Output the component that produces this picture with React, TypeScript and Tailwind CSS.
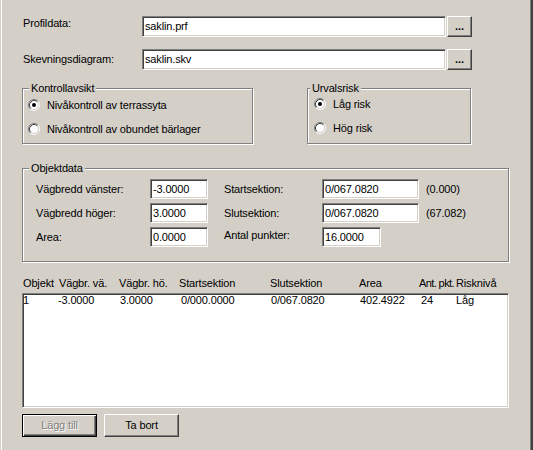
const sunken =
  'border border-t-[#808080] border-l-[#808080] border-b-white border-r-white shadow-[inset_1px_1px_0_#404040,inset_-1px_-1px_0_#d4d0c8] bg-white';
const raised =
  'border border-t-white border-l-white border-b-[#404040] border-r-[#404040] shadow-[inset_-1px_-1px_0_#808080] bg-[#d4d0c8]';

function Edit({ value, className }: { value: string; className: string }) {
  return (
    <div className={`${sunken} ${className} flex items-center pl-[2px] leading-[13px] whitespace-nowrap overflow-hidden`}>
      {value}
    </div>
  );
}

function Radio({ checked }: { checked?: boolean }) {
  return (
    <svg width="12" height="12" viewBox="0 0 12 12" className="shrink-0">
      <circle cx="6" cy="6" r="4.5" fill="#fff" />
      <path d="M2.11 9.89A5.5 5.5 0 0 1 9.89 2.11" fill="none" stroke="#808080" strokeWidth="1" />
      <path d="M9.89 2.11A5.5 5.5 0 0 1 2.11 9.89" fill="none" stroke="#fff" strokeWidth="1" />
      <path d="M2.82 9.18A4.5 4.5 0 0 1 9.18 2.82" fill="none" stroke="#404040" strokeWidth="1" />
      <path d="M9.18 2.82A4.5 4.5 0 0 1 2.82 9.18" fill="none" stroke="#d4d0c8" strokeWidth="1" />
      {checked && <circle cx="6" cy="6" r="2" fill="#000" />}
    </svg>
  );
}

function GroupBox({
  title,
  titleLeft,
  className,
  children,
}: {
  title: string;
  titleLeft: string;
  className: string;
  children?: React.ReactNode;
}) {
  return (
    <div className={`relative border border-[#808080] shadow-[inset_1px_1px_0_#fff,1px_1px_0_#fff] ${className}`}>
      <span className={`absolute ${titleLeft} top-[-8px] px-[2px] bg-[#d4d0c8] leading-[14px]`}>{title}</span>
      {children}
    </div>
  );
}

const headers = [
  ['Objekt', 'w-[36px]'],
  ['Vägbr. vä.', 'w-[60px]'],
  ['Vägbr. hö.', 'w-[60px]'],
  ['Startsektion', 'w-[91px]'],
  ['Slutsektion', 'w-[89px]'],
  ['Area', 'w-[60px]'],
  ['Ant. pkt.', 'w-[37px] tracking-[-0.6px]'],
  ['Risknivå', ''],
];

const rowCells = [
  ['1', 'w-[35px]'],
  ['-3.0000', 'w-[62px]'],
  ['3.0000', 'w-[61px]'],
  ['0/000.0000', 'w-[90px]'],
  ['0/067.0820', 'w-[89px]'],
  ['402.4922', 'w-[61px]'],
  ['24', 'w-[35px]'],
  ['Låg', ''],
];

export default function App() {
  return (
    <div className="w-[533px] h-[450px] bg-[#d4d0c8] pl-px text-black text-[11px] tracking-[-0.15px] font-['Liberation_Sans',Arial,sans-serif]">
      <div className="h-full border-l border-white border-r-2 border-r-[#404040] shadow-[inset_-1px_0_0_#808080] pl-[20px] pt-[16px] flex flex-col">
        {/* file rows */}
        <div className="flex items-start h-[21px]">
          <span className="w-[120px] pl-px leading-[13px] pt-px">Profildata:</span>
          <Edit value="saklin.prf" className="w-[304px] h-[21px]" />
          <button className={`${raised} ml-px w-[25px] h-[21px] font-bold leading-[13px] tracking-normal`}>...</button>
        </div>
        <div className="flex items-center h-[21px] mt-[12px]">
          <span className="w-[120px] pl-px leading-[13px]">Skevningsdiagram:</span>
          <Edit value="saklin.skv" className="w-[304px] h-[21px]" />
          <button className={`${raised} ml-px w-[25px] h-[21px] font-bold leading-[13px] tracking-normal`}>...</button>
        </div>

        {/* option groups */}
        <div className="flex mt-[18px]">
          <GroupBox title="Kontrollavsikt" titleLeft="left-[6px]" className="w-[231px] h-[56px]">
            <div className="flex flex-col gap-[8px] pt-[8px] pl-[5px]">
              <label className="flex items-center gap-[7px] h-[16px]">
                <Radio checked />
                <span>Nivåkontroll av terrassyta</span>
              </label>
              <label className="flex items-center gap-[7px] h-[16px]">
                <Radio />
                <span>Nivåkontroll av obundet bärlager</span>
              </label>
            </div>
          </GroupBox>
          <GroupBox title="Urvalsrisk" titleLeft="left-[2px]" className="ml-[54px] w-[164px] h-[56px]">
            <div className="flex flex-col gap-[8px] pt-[7px] pl-[6px]">
              <label className="flex items-center gap-[7px] h-[16px]">
                <Radio checked />
                <span>Låg risk</span>
              </label>
              <label className="flex items-center gap-[7px] h-[16px]">
                <Radio />
                <span>Hög risk</span>
              </label>
            </div>
          </GroupBox>
        </div>

        {/* object data */}
        <GroupBox title="Objektdata" titleLeft="left-[6px]" className="mt-[24px] w-[487px] h-[94px]">
          <div className="flex flex-col gap-[4px] pt-[10px] pl-[13px]">
            <div className="flex items-center h-[20px]">
              <span className="w-[114px]">Vägbredd vänster:</span>
              <Edit value="-3.0000" className="w-[58px] h-[20px]" />
              <span className="ml-[16px] w-[98px]">Startsektion:</span>
              <Edit value="0/067.0820" className="w-[97px] h-[20px]" />
              <span className="ml-[7px]">(0.000)</span>
            </div>
            <div className="flex items-center h-[20px]">
              <span className="w-[114px]">Vägbredd höger:</span>
              <Edit value="3.0000" className="w-[58px] h-[20px]" />
              <span className="ml-[16px] w-[98px]">Slutsektion:</span>
              <Edit value="0/067.0820" className="w-[97px] h-[20px]" />
              <span className="ml-[7px]">(67.082)</span>
            </div>
            <div className="flex items-center h-[20px]">
              <span className="w-[114px]">Area:</span>
              <Edit value="0.0000" className="w-[58px] h-[20px]" />
              <span className="ml-[16px] w-[98px] mb-[4px]">Antal punkter:</span>
              <Edit value="16.0000" className="w-[59px] h-[20px]" />
            </div>
          </div>
        </GroupBox>

        {/* list */}
        <div className="flex items-center h-[14px] mt-[14px] pl-px whitespace-nowrap">
          {headers.map(([t, w]) => (
            <span key={t} className={`${w} shrink-0`}>{t}</span>
          ))}
        </div>
        <div className={`${sunken} mt-[3px] w-[487px] h-[115px]`}>
          <div className="flex leading-[12px] whitespace-nowrap">
            {rowCells.map(([t, w]) => (
              <span key={t} className={`${w} shrink-0`}>{t}</span>
            ))}
          </div>
        </div>

        {/* buttons */}
        <div className="flex gap-[7px] mt-[6px]">
          <button
            disabled
            className="w-[75px] h-[23px] border border-black bg-[#d4d0c8] shadow-[inset_1px_1px_0_#fff,inset_-1px_-1px_0_#404040,inset_-2px_-2px_0_#808080] text-[#808080] [text-shadow:1px_1px_0_#fff]"
          >
            Lägg till
          </button>
          <button className={`${raised} w-[75px] h-[23px]`}>Ta bort</button>
        </div>
      </div>
    </div>
  );
}
